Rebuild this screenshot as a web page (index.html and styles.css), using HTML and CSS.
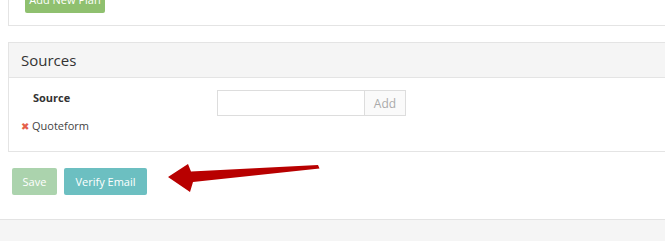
FILE: index.html
```html
<!DOCTYPE html>
<html lang="en">
<head>
    <meta charset="UTF-8">
    <meta name="viewport" content="width=device-width, initial-scale=1.0">
    <title>Sources</title>
    <link rel="stylesheet" href="styles.css">
</head>
<body>
    <div class="page">
        <div class="panel plans">
            <button class="btn btn-plan">Add New Plan</button>
        </div>

        <div class="panel sources">
            <div class="panel-heading">Sources</div>
            <div class="panel-body">
                <div class="source-row">
                    <div class="label">Source</div>
                    <div class="input-group">
                        <input type="text" class="input-field">
                        <span class="input-addon">Add</span>
                    </div>
                </div>
                <div class="source-item"><span class="remove">&#10006;</span>Quoteform</div>
            </div>
        </div>

        <div class="actions">
            <button class="btn btn-save">Save</button>
            <button class="btn btn-verify">Verify Email</button>
        </div>
    </div>

    <div class="footer"></div>

    <svg class="arrow" width="665" height="241" viewBox="0 0 665 241">
        <polygon points="168,177 188,164 191,171.5 318,165 319.5,168.5 193,182 190,192" fill="#b80000"/>
    </svg>
</body>
</html>
```

FILE: styles.css
```css
* {
    margin: 0;
    padding: 0;
    box-sizing: border-box;
    font-family: 'Open Sans', sans-serif;
}

body {
    width: 665px;
    height: 241px;
    overflow: hidden;
    position: relative;
    background: #fff;
    color: #333;
}

.page {
    padding-left: 8px;
    width: 720px;
}

.panel {
    border: 1px solid #e4e4e4;
    background: #fff;
}

.plans {
    margin-top: -14px;
    padding: 0 16px 12px;
    border-top: none;
}

.btn {
    border: none;
    border-radius: 2px;
    color: #fff;
    font-size: 11px;
    height: 27px;
    padding: 0 11px;
    cursor: pointer;
}

.btn-plan {
    background: #8fc06f;
    width: 80px;
    padding: 0;
}

.sources {
    margin-top: 16px;
}

.panel-heading {
    background: #f5f5f5;
    border-bottom: 1px solid #e4e4e4;
    padding: 7px 12px;
    font-size: 15px;
    line-height: 20px;
    color: #333;
}

.panel-body {
    padding: 12px 12px 17px;
}

.source-row {
    display: flex;
    align-items: flex-start;
}

.label {
    width: 196px;
    padding: 0 0 0 12px;
    font-size: 11px;
    font-weight: bold;
    line-height: 16px;
}

.input-group {
    display: flex;
}

.input-field {
    width: 147px;
    height: 26px;
    border: 1px solid #ddd;
    border-right: none;
    font-size: 12px;
    outline: none;
}

.input-addon {
    width: 42px;
    height: 26px;
    border: 1px solid #ddd;
    background: #fafafa;
    color: #aaa;
    font-size: 12px;
    display: flex;
    align-items: center;
    justify-content: center;
}

.source-item {
    margin-top: 2px;
    font-size: 11px;
    line-height: 16px;
    color: #444;
}

.remove {
    color: #e5604a;
    font-size: 10px;
    margin-right: 3px;
}

.actions {
    display: flex;
    gap: 7px;
    padding: 16px 0 24px 4px;
}

.btn-save {
    background: #abd3ad;
    width: 45px;
    padding: 0;
}

.btn-verify {
    background: #6cbfc1;
    width: 83px;
    padding: 0;
}

.footer {
    border-top: 1px solid #e3e3e3;
    background: #f5f5f5;
    height: 40px;
}

.arrow {
    position: absolute;
    left: 0;
    top: 0;
    pointer-events: none;
}
```
